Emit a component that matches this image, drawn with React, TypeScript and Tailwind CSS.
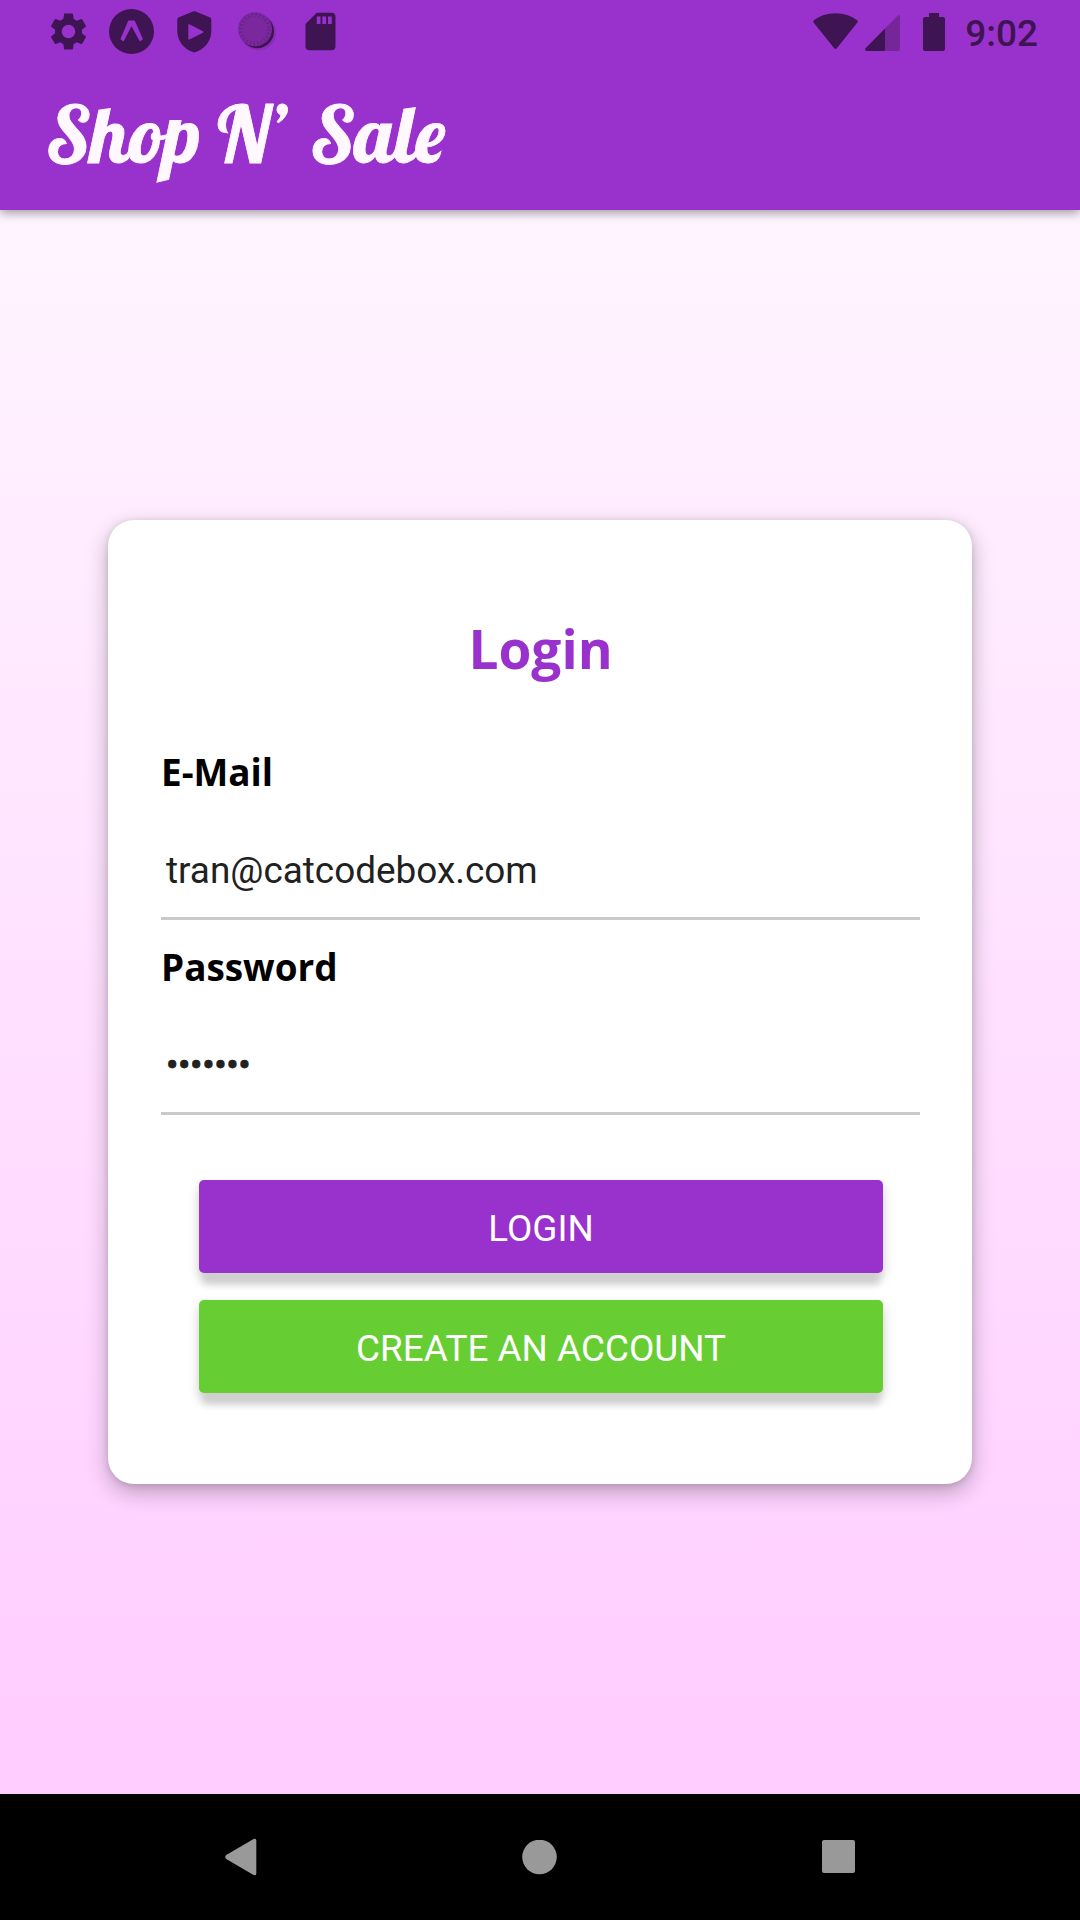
import type { ReactNode } from "react";
import { MdSettings, MdSdCard } from "react-icons/md";

function ExpoIcon() {
  return (
    <svg className="ml-[18px] size-[45px]" viewBox="0 0 45 45">
      <circle cx="22.5" cy="22.5" r="22.5" fill="#3e1452" />
      <path d="M19.3 11.6h6.4L34 30.2l-3.1 2.2-8.4-15.2-8 15.2-3.1-2.2z" fill="#9932cc" />
    </svg>
  );
}

function ShieldIcon() {
  return (
    <svg className="ml-[23px] h-[42px] w-[35px]" viewBox="0 0 35 42">
      <path
        fillRule="evenodd"
        d="M16 .5Q17.3 0 18.6 .5L33.2 6.6Q34.3 7.2 34.3 8.5V20C34.3 31 27 38.5 17.3 41.6C7.6 38.5 .3 31 .3 20V8.5Q.3 7.2 1.4 6.6ZM12.9 13.4Q11.3 12.7 11.3 14.2V27.4Q11.3 28.9 12.9 28.2L26 21.8Q27.2 21 26 20.2Z"
        fill="#3e1452"
      />
    </svg>
  );
}

function DialIcon() {
  return (
    <svg className="ml-[26px] size-[40px]" viewBox="0 0 40 40">
      <circle cx="20.6" cy="21" r="17.6" fill="#8b2db6" />
      <circle cx="19.1" cy="19.4" r="16.9" fill="#3e1452" />
      <circle cx="17" cy="17.3" r="17" fill="#7b289f" />
      <circle cx="17" cy="17.3" r="14.2" fill="none" stroke="#67228a" strokeWidth="4" strokeDasharray="1.2 2.517" />
    </svg>
  );
}

function StatusBar() {
  return (
    <div className="flex h-[63px] items-center pr-[42px] pl-[46px] text-[#3e1452]">
      <MdSettings className="size-[45px]" />
      <ExpoIcon />
      <ShieldIcon />
      <DialIcon />
      <MdSdCard className="ml-[20px] size-[45px]" />
      <svg className="ml-auto h-[37px] w-[45px]" viewBox="0 0 45 37">
        <path d="M.8 7.3Q10 .3 22.5 .3T44.2 7.3Q45.3 8.3 44.2 9.8L24 35Q22.5 37 21 35L.8 9.8Q-.3 8.3 .8 7.3Z" fill="currentColor" />
      </svg>
      <svg className="mt-[3px] ml-[7px] h-[36px] w-[35px]" viewBox="0 0 35 36">
        <path d="M20 13.5L33 .6Q35 -.4 35 1.5V34Q35 36 33 36H20Z" fill="#752699" />
        <path d="M20 13.5V36H1.3Q-.7 35.6 .5 33.2Z" fill="currentColor" />
      </svg>
      <svg className="ml-[23px] h-[38px] w-[22px]" viewBox="0 0 22 38">
        <path d="M6 0H16V4H20Q22 4 22 6V36Q22 38 20 38H2Q0 38 0 36V6Q0 4 2 4H6Z" fill="currentColor" />
      </svg>
      <span className="mt-[3px] ml-[20px] text-[37px] leading-none font-medium">9:02</span>
    </div>
  );
}

function Field({ label, children }: { label: string; children: ReactNode }) {
  return (
    <label className="block h-[195px]">
      <span className="block h-[50px] font-['Open_Sans'] text-[36.9px] leading-[50px] font-bold text-black">{label}</span>
      <span className="mt-[21px] flex h-[102px] items-center border-b-[3px] border-[#cacaca] pt-[6px] pl-[5px] text-[36.9px] text-[#212121]">
        {children}
      </span>
    </label>
  );
}

function Button({ className, children }: { className: string; children: ReactNode }) {
  return (
    <button
      className={`${className} block h-[93px] w-full rounded-[5px] pt-[5px] text-[36.9px] leading-none text-white shadow-[0_15px_7px_-4px_#cfcfcf,0_6px_12px_rgba(0,0,0,0.2)]`}
    >
      {children}
    </button>
  );
}

export default function App() {
  return (
    <div className="flex h-[1920px] w-[1080px] flex-col overflow-hidden font-[Roboto,sans-serif]">
      <header className="z-10 h-[210px] shrink-0 bg-[#9932cc] shadow-[0_3px_10px_rgba(0,0,0,0.38)]">
        <StatusBar />
        <h1 className="h-[147px] pt-[27px] pl-[46px] font-['Lobster','Liberation_Serif',serif] text-[78px] leading-[88px] font-normal text-[#fff8ff] [-webkit-text-stroke:0.8px_#fff8ff]">
          Shop N’ <span className="ml-[5px]">Sale</span>
        </h1>
      </header>
      <main className="flex grow items-center justify-center bg-linear-to-b from-[#fff5ff] to-[#ffccff]">
        <section className="h-[964px] w-[864px] rounded-[26px] bg-white pr-[52px] pl-[53px] shadow-[0_8px_22px_rgba(0,0,0,0.27),0_1px_6px_rgba(0,0,0,0.12)]">
          <h2 className="pt-[93px] text-center font-['Open_Sans'] text-[53.2px] leading-[72px] font-bold text-[#9932cc]">Login</h2>
          <div className="mt-[62px]">
            <Field label="E-Mail">tran@catcodebox.com</Field>
            <Field label="Password">
              <span className="tracking-[-0.4px] [-webkit-text-stroke:0.8px_#212121]">•••••••</span>
            </Field>
          </div>
          <div className="mt-[43px] flex flex-col gap-[27px] pr-[37px] pl-[38px]">
            <Button className="bg-[#9932cc]">LOGIN</Button>
            <Button className="bg-[#66cd32]">CREATE AN ACCOUNT</Button>
          </div>
        </section>
      </main>
      <nav className="flex h-[126px] shrink-0 items-center bg-black">
        <svg className="ml-[225px] h-[38px] w-[32px]" viewBox="0 0 32 38">
          <path d="M1.2 17L28.6 1Q31.3 0 31.3 2.6V35.4Q31.3 38 28.6 37L1.2 21Q-.7 19 1.2 17Z" fill="#999" />
        </svg>
        <svg className="ml-[265px] size-[35px]" viewBox="0 0 35 35">
          <circle cx="17.5" cy="17" r="17.3" fill="#999" />
        </svg>
        <span className="-mt-px ml-[265px] size-[33px] rounded-[2px] bg-[#999]" />
      </nav>
    </div>
  );
}
